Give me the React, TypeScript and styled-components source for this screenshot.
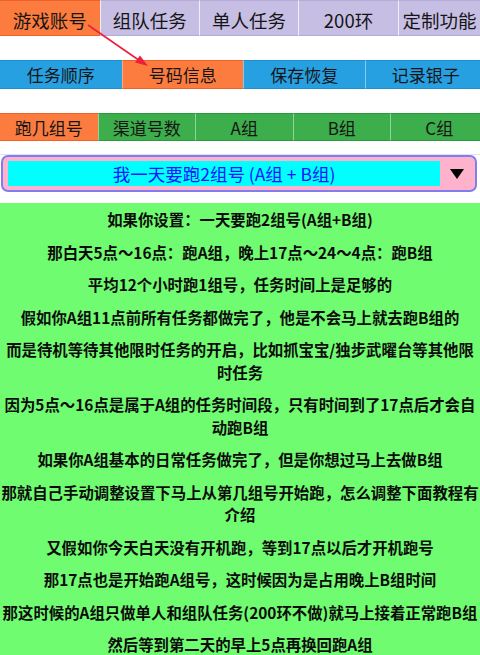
import React from "react";
import styled, { createGlobalStyle } from "styled-components";

const Global = createGlobalStyle`
  html, body { margin: 0; padding: 0; background: #ffffff; }
  body { font-family: "Noto Sans CJK SC", "Noto Sans", sans-serif; width: 480px; overflow: hidden; }
`;

const Page = styled.div`
  position: relative;
  width: 480px;
  height: 655px;
  overflow: hidden;
  background: #ffffff;
  display: flex;
  flex-direction: column;
`;

const TabRow = styled.div<{ $h: number; $mt: number }>`
  display: flex;
  height: ${(p) => p.$h}px;
  margin-top: ${(p) => p.$mt}px;
  overflow: hidden;
  flex-shrink: 0;
`;

type Tone = "orange" | "purple" | "blue" | "green";
const fills: Record<Tone, [string, string, string]> = {
  orange: ["#fb7c3e", "#f0602a", "rgba(255,255,255,0.35)"],
  purple: ["#c7bee4", "#b6abd9", "rgba(255,255,255,0.75)"],
  blue: ["#27a0e2", "#1f8fd0", "rgba(255,255,255,0.45)"],
  green: ["#3cae4b", "#2a9a3c", "rgba(255,255,255,0.45)"],
};

const Tab = styled.div<{ $tone: Tone; $w?: number; $size: number; $pt?: number }>`
  box-sizing: border-box;
  flex: ${(p) => (p.$w ? `0 0 ${p.$w}px` : "1 1 auto")};
  background: ${(p) => fills[p.$tone][0]};
  border-top: 1px solid ${(p) => fills[p.$tone][1]};
  border-bottom: 1px solid ${(p) => fills[p.$tone][1]};
  border-left: 1px solid ${(p) => fills[p.$tone][2]};
  &:first-child { border-left: none; }
  display: flex;
  align-items: center;
  justify-content: center;
  padding-top: ${(p) => p.$pt ?? 0}px;
  font-size: ${(p) => p.$size}px;
  color: #151515;
  white-space: nowrap;
`;

const SelectLine = styled.div`
  margin-top: 13px;
  height: 1px;
  background: #e2e0f6;
  flex-shrink: 0;
`;

const Select = styled.div`
  box-sizing: border-box;
  margin: 0 3px 0 1px;
  height: 37px;
  border: 2px solid #7e7ef0;
  border-radius: 7px;
  background: #ffb2cc;
  display: flex;
  align-items: center;
  padding: 0 0 0 5px;
  flex-shrink: 0;
`;

const SelectValue = styled.div`
  width: 432px;
  height: 25px;
  background: #00ffff;
  display: flex;
  align-items: center;
  justify-content: center;
  color: #1414ff;
  font-size: 17.5px;
  white-space: nowrap;
`;

const Caret = styled.div`
  flex: 1;
  display: flex;
  justify-content: center;
  align-items: center;
  padding-right: 2px;
`;

const Content = styled.div`
  margin-top: 11px;
  flex: 1;
  background: #70fc70;
  padding-top: 5px;
`;

const Para = styled.p`
  margin: 0 0 10px 0;
  text-align: center;
  font-size: 15.4px;
  line-height: 22.5px;
  font-weight: 700;
  color: #0c0c0c;
`;

const Arrow = styled.svg`
  position: absolute;
  left: 0;
  top: 0;
  pointer-events: none;
`;

const row1: [string, Tone, number | undefined][] = [
  ["游戏账号", "orange", 99.5],
  ["组队任务", "purple", 99.5],
  ["单人任务", "purple", 99],
  ["200环", "purple", 100],
  ["定制功能", "purple", undefined],
];
const row2: [string, Tone][] = [
  ["任务顺序", "blue"],
  ["号码信息", "orange"],
  ["保存恢复", "blue"],
  ["记录银子", "blue"],
];
const row3: [string, Tone][] = [
  ["跑几组号", "orange"],
  ["渠道号数", "green"],
  ["A组", "green"],
  ["B组", "green"],
  ["C组", "green"],
];

const paras = [
  "如果你设置：一天要跑2组号(A组+B组)",
  "那白天5点～16点：跑A组，晚上17点～24～4点：跑B组",
  "平均12个小时跑1组号，任务时间上是足够的",
  "假如你A组11点前所有任务都做完了，他是不会马上就去跑B组的",
  "而是待机等待其他限时任务的开启，比如抓宝宝/独步武曜台等其他限时任务",
  "因为5点～16点是属于A组的任务时间段，只有时间到了17点后才会自动跑B组",
  "如果你A组基本的日常任务做完了，但是你想过马上去做B组",
  "那就自己手动调整设置下马上从第几组号开始跑，怎么调整下面教程有介绍",
  "又假如你今天白天没有开机跑，等到17点以后才开机跑号",
  "那17点也是开始跑A组号，这时候因为是占用晚上B组时间",
  "那这时候的A组只做单人和组队任务(200环不做)就马上接着正常跑B组",
  "然后等到第二天的早上5点再换回跑A组",
];

export default function App() {
  return (
    <Page>
      <Global />
      <TabRow $h={36} $mt={0}>
        {row1.map(([t, tone, w]) => (
          <Tab key={t} $tone={tone} $w={w} $size={18.5} $pt={3}>
            {t}
          </Tab>
        ))}
      </TabRow>
      <TabRow $h={29} $mt={24}>
        {row2.map(([t, tone]) => (
          <Tab key={t} $tone={tone} $w={121.5} $size={17}>
            {t}
          </Tab>
        ))}
      </TabRow>
      <TabRow $h={28} $mt={24}>
        {row3.map(([t, tone]) => (
          <Tab key={t} $tone={tone} $w={97.5} $size={17}>
            {t}
          </Tab>
        ))}
      </TabRow>
      <SelectLine />
      <Select>
        <SelectValue>我一天要跑2组号 (A组 + B组)</SelectValue>
        <Caret>
          <svg width="14" height="10" viewBox="0 0 14 10">
            <polygon points="0,0 14,0 7,10" fill="#000" />
          </svg>
        </Caret>
      </Select>
      <Content>
        {paras.map((p) => (
          <Para key={p}>{p}</Para>
        ))}
      </Content>
      <Arrow width="480" height="100" viewBox="0 0 480 100">
        <line x1="88" y1="25" x2="143" y2="63" stroke="#ee1e3c" strokeWidth="1.6" />
        <polygon points="148,66 135,62.5 140,55.5" fill="#ee1e3c" />
      </Arrow>
    </Page>
  );
}
